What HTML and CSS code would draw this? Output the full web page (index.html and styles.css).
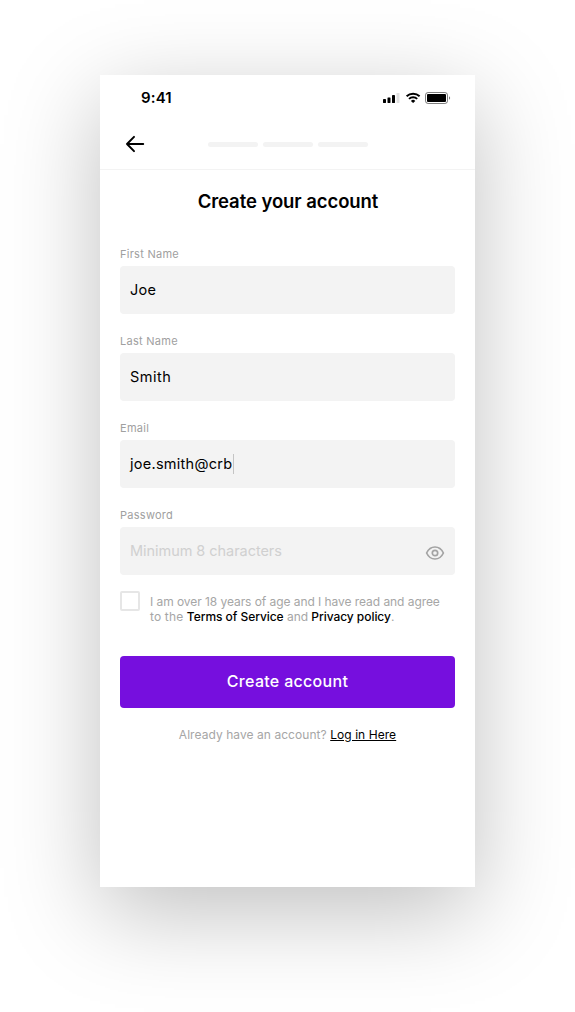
FILE: index.html
```html
<!DOCTYPE html>
<html lang="en">
<head>
<meta charset="utf-8">
<title>Create your account</title>
<link rel="stylesheet" href="styles.css">
</head>
<body>
<main class="screen">
  <div class="status">
    <span class="time">9:41</span>
    <svg class="status-icons" width="68" height="12" viewBox="0 0 68 12">
      <g fill="#000">
        <rect x="0" y="7" width="3" height="4" rx=".4"/>
        <rect x="4.500" y="5.500" width="3" height="5.500" rx=".4"/>
        <rect x="9" y="3" width="3" height="8" rx=".4"/>
        <rect x="13.500" y="1" width="3" height="10" rx=".4" opacity=".12"/>
      </g>
      <g fill="none" stroke="#000" stroke-width="1.900">
        <path d="M23.600 4.300a9.400 9.400 0 0 1 13 0"/>
        <path d="M26 6.900a5.900 5.900 0 0 1 8.200 0"/>
      </g>
      <path d="M27.900 8.900a3.200 3.200 0 0 1 4.400 0L30.100 11z"/>
      <rect x="42.500" y=".5" width="22" height="11" rx="2.600" fill="none" stroke="#000" stroke-opacity=".5"/>
      <rect x="44" y="2" width="19" height="8" rx="1"/>
      <path d="M66 4.200v3.600a2 2 0 0 0 0-3.600z" opacity=".5"/>
    </svg>
  </div>
  <header class="nav">
    <svg class="back" width="20" height="18" viewBox="0 0 20 18" fill="none" stroke="#000" stroke-width="2" stroke-linecap="round" stroke-linejoin="round">
      <path d="M18.200 9H2M9 1.900L2 9l7 7.100"/>
    </svg>
    <div class="steps"><i class="step"></i><i class="step"></i><i class="step"></i></div>
  </header>
  <h1 class="title">Create your account</h1>
  <form class="form">
    <div class="field"><span class="label">First Name</span><div class="input"><span class="value">Joe</span></div></div>
    <div class="field"><span class="label">Last Name</span><div class="input"><span class="value value-wide">Smith</span></div></div>
    <div class="field"><span class="label">Email</span><div class="input"><span class="value">joe.smith@crb</span><i class="caret"></i></div></div>
    <div class="field"><span class="label">Password</span>
      <div class="input"><span class="placeholder">Minimum 8 characters</span>
        <svg class="eye" width="20" height="16" viewBox="0 0 20 16" fill="none" stroke="#a3a3a3" stroke-width="1.700">
          <path d="M1.600 8C3.400 4.200 6.400 2 10 2s6.600 2.200 8.400 6C16.600 11.800 13.600 14 10 14S3.400 11.800 1.600 8z" stroke-linejoin="round"/>
          <circle cx="10" cy="8" r="2.700"/>
        </svg>
      </div>
    </div>
    <div class="consent">
      <i class="checkbox"></i>
      <p class="terms"><span class="line line-a">I am over 18 years of age and I have read and agree</span><span class="line line-b"><span class="lead">to the </span><b>Terms of Service</b> and <b>Privacy policy</b>.</span></p>
    </div>
    <button class="submit" type="button">Create account</button>
    <p class="login"><span>Already have an account?</span> <a class="link">Log in Here</a></p>
  </form>
</main>
</body>
</html>
```
FILE: styles.css
```css
* { box-sizing: border-box; }
body {
  margin: 0;
  padding: 75px 100px 125px;
  background: #fff;
  font-family: Inter, "Liberation Sans", sans-serif;
  color: #000;
}
.screen {
  width: 375px;
  height: 812px;
  background: #fff;
  box-shadow: 0 25px 88px rgba(0, 0, 0, .25);
}
.status {
  height: 44px;
  padding: 1px 24px 0 41px;
  display: flex;
  align-items: center;
  justify-content: space-between;
}
.time { font-size: 15px; font-weight: 600; line-height: 20px; letter-spacing: .15px; }
.status-icons { display: block; margin-top: 1px; }
.nav {
  height: 51px;
  padding: 0 25px;
  display: flex;
  align-items: center;
  border-bottom: 1px solid #f3f3f3;
}
.back { display: block; }
.steps { display: flex; gap: 5px; margin-left: 63px; }
.step { width: 50px; height: 5px; border-radius: 3px; background: #f3f3f3; }
.title {
  margin: 18px 0 1px 1px;
  font-size: 18.5px;
  line-height: 26px;
  font-weight: 600;
  text-align: center;
  letter-spacing: -.07px;
}
.form { padding: 31px 20px 0; }
.field { margin-bottom: 19px; }
.label {
  display: block;
  height: 20px;
  line-height: 16px;
  font-size: 11px;
  font-weight: 400;
  letter-spacing: .27px;
  color: #a0a0a0;
}
.input {
  height: 48px;
  padding: 0 10px;
  display: flex;
  align-items: center;
  border-radius: 4px;
  background: #f3f3f3;
  font-size: 14.5px;
  line-height: 20px;
}
.value { letter-spacing: .27px; }
.value-wide { letter-spacing: .5px; }
.caret { width: 1px; height: 20px; margin-left: 1px; background: #c4c4c4; }
.placeholder { color: #d0d0d0; letter-spacing: -.05px; }
.eye { margin: 4px 0 0 auto; }
.consent { display: flex; gap: 10px; margin-top: -3px; }
.checkbox { width: 20px; height: 20px; border: 2px solid #e6e6e6; border-radius: 2px; background: #fff; }
.terms { margin: 3px 0 0; font-size: 12px; line-height: 15px; color: #a6a6a6; white-space: nowrap; }
.line { display: block; }
.line-a { letter-spacing: -.06px; }
.line-b { letter-spacing: -.05px; }
.lead { letter-spacing: .15px; }
.terms b { font-weight: 500; color: #000; }
.submit {
  display: block;
  width: 335px;
  height: 52px;
  margin-top: 32px;
  padding: 0 0 2px;
  border: 0;
  border-radius: 4px;
  background: #760fde;
  color: #fff;
  font: 500 16px/20px Inter, "Liberation Sans", sans-serif;
  letter-spacing: .3px;
}
.login { margin: 18px 0 0; text-align: center; font-size: 12px; line-height: 18px; letter-spacing: .06px; color: #a6a6a6; }
.link { color: #000; text-decoration: underline; }
```
